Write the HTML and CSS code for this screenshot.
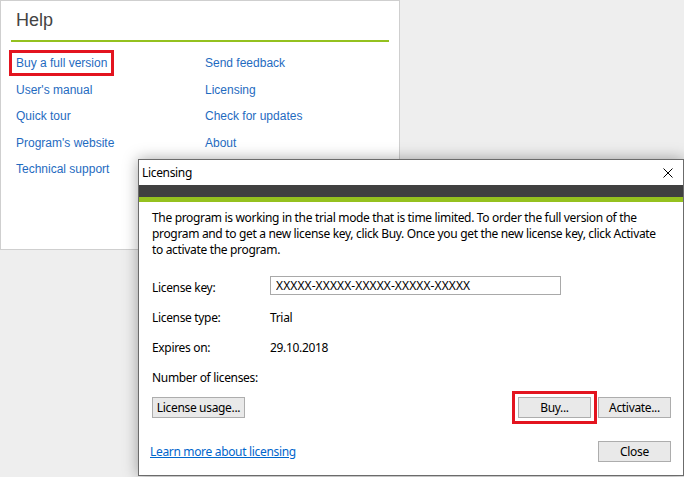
FILE: index.html
```html
<!DOCTYPE html>
<html lang="en">
<head>
    <meta charset="UTF-8">
    <title>Help - Licensing</title>
    <link rel="stylesheet" href="styles.css">
</head>
<body>
    <div class="help">
        <h1 class="help-title">Help</h1>
        <ul class="help-links">
            <li><a class="marked">Buy a full version</a></li>
            <li><a>Send feedback</a></li>
            <li><a>User's manual</a></li>
            <li><a>Licensing</a></li>
            <li><a>Quick tour</a></li>
            <li><a>Check for updates</a></li>
            <li><a>Program's website</a></li>
            <li><a>About</a></li>
            <li><a>Technical support</a></li>
        </ul>
    </div>

    <div class="dialog">
        <div class="titlebar">
            <span class="caption">Licensing</span>
            <span class="close-x">
                <svg width="10" height="10" viewBox="0 0 10 10"><path d="M0.5 0.5 L9.5 9.5 M9.5 0.5 L0.5 9.5" stroke="#000" stroke-width="1" fill="none"/></svg>
            </span>
        </div>
        <div class="band-dark"></div>
        <div class="band-green"></div>
        <div class="dialog-body">
            <p class="intro">The program is working in the trial mode that is time limited. To order the full version of the<br>program and to get a new license key, click Buy. Once you get the new license key, click Activate<br>to activate the program.</p>
            <div class="fields">
                <span class="label">License key:</span>
                <span class="value"><input class="key" type="text" value="XXXXX-XXXXX-XXXXX-XXXXX-XXXXX"></span>
                <span class="label">License type:</span>
                <span class="value">Trial</span>
                <span class="label">Expires on:</span>
                <span class="value">29.10.2018</span>
                <span class="label">Number of licenses:</span>
                <span class="value"></span>
            </div>
            <div class="actions">
                <button class="btn wide">License usage...</button>
                <span class="spacer"></span>
                <button class="btn marked">Buy...</button>
                <button class="btn">Activate...</button>
            </div>
            <div class="footer">
                <a class="learn">Learn more about licensing</a>
                <button class="btn">Close</button>
            </div>
        </div>
    </div>
</body>
</html>
```

FILE: styles.css
```css
*{
    margin: 0;
    padding: 0;
    list-style: none;
    box-sizing: border-box;
}
body{
    background-color: #eeeeee;
    width: 684px;
    height: 477px;
    overflow: hidden;
    position: relative;
    font-family: "Liberation Sans", Arial, sans-serif;
}
.help{
    width: 400px;
    height: 250px;
    background-color: #fff;
    border: solid 1px #cfcfcf;
    padding: 8px 10px 0 10px;
}
.help-title{
    font-size: 18px;
    line-height: 22px;
    font-weight: normal;
    color: #444;
    padding: 0 5px 9px;
    border-bottom: solid 2px #94c11f;
}
.help-links{
    display: grid;
    grid-template-columns: 189px 1fr;
    grid-auto-rows: 26.6px;
    margin-top: 8px;
    padding-left: 5px;
    font-size: 12px;
    line-height: 26.6px;
}
.help-links a{
    color: #1f6bbf;
}
.marked{
    outline: solid 3px #e3141f;
    outline-offset: 3px;
}
.help-links .marked{
    outline-offset: 2px;
    padding: 1px 2px;
    margin-left: -2px;
}

.dialog{
    position: absolute;
    left: 138px;
    top: 159px;
    width: 546px;
    height: 317px;
    background-color: #fff;
    border: solid 1px #6b6b6b;
    box-shadow: 0 0 14px rgba(0,0,0,0.35);
    font-family: "Noto Sans", "Open Sans", sans-serif;
    font-size: 12px;
    letter-spacing: -0.33px;
    color: #000;
}
.titlebar{
    height: 25px;
    display: flex;
    align-items: center;
    padding-left: 3px;
}
.caption{
    flex: 1;
}
.close-x{
    width: 10px;
    height: 10px;
    margin-right: 10px;
    display: flex;
}
.band-dark{
    height: 12px;
    background-color: #404040;
}
.band-green{
    height: 5px;
    background-color: #95c11f;
}
.dialog-body{
    padding: 8px 12px 0 13px;
}
.intro{
    line-height: 16px;
    white-space: nowrap;
}
.fields{
    display: grid;
    grid-template-columns: 118px 1fr;
    grid-auto-rows: 30px;
    margin-top: 14px;
    align-items: center;
}
.key{
    display: block;
    width: 291px;
    height: 19px;
    margin-top: -3px;
    border: solid 1px #a9a9a9;
    padding-left: 5px;
    font-family: "Noto Sans", "Open Sans", sans-serif;
    font-size: 12px;
    letter-spacing: 0.1px;
    color: #000;
    outline: none;
}
.actions{
    display: flex;
    gap: 7px;
    margin-top: 5px;
}
.spacer{
    flex: 1;
}
.btn{
    width: 73px;
    height: 21px;
    background-color: #e9e9e9;
    border: solid 1px #adadad;
    font-family: "Noto Sans", "Open Sans", sans-serif;
    font-size: 12px;
    letter-spacing: -0.33px;
    color: #000;
}
.btn.wide{
    width: 93px;
}
.btn.marked{
    outline-offset: 3px;
}
.footer{
    display: flex;
    justify-content: space-between;
    align-items: center;
    margin-top: 23px;
}
.learn{
    color: #0066cc;
    text-decoration: underline;
    margin-left: -2px;
}
```
